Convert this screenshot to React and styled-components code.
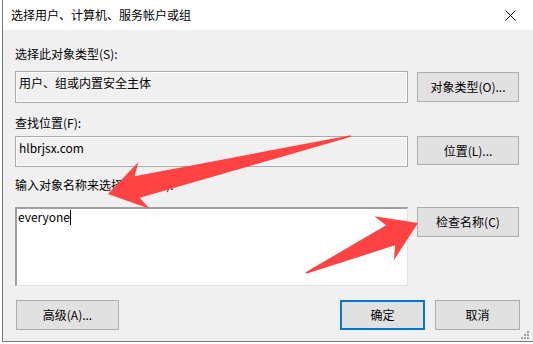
import styled, { createGlobalStyle } from 'styled-components';

const Global = createGlobalStyle`
    html, body {
        margin: 0;
        padding: 0;
        width: 533px;
        height: 344px;
        overflow: hidden;
        background: #ffffff;
    }
    * { box-sizing: border-box; }
`

const Page = styled.div`
    position: relative;
    width: 533px;
    height: 344px;
    overflow: hidden;
    padding-left: 2px;
    font-family: "Noto Sans CJK SC", "Noto Sans", sans-serif;
    font-size: 12px;
    color: #000;
`

const Dialog = styled.div`
    display: flex;
    flex-direction: column;
    width: 545px;
    height: 342px;
    border: 1px solid #7a7a7a;
    border-top: none;
    background: #f0f0f0;
`

const TitleBar = styled.div`
    height: 30px;
    flex-shrink: 0;
    display: flex;
    align-items: center;
    justify-content: space-between;
    background: #fff;
    padding: 0 0 0 8px;
    width: 530px;
    line-height: 16px;
`

const CloseBtn = styled.div`
    width: 46px;
    height: 30px;
    display: flex;
    align-items: center;
    justify-content: center;
`

const Body = styled.div`
    display: flex;
    flex-direction: column;
    padding: 0 12px;
    width: 530px;
`

const Label = styled.div`
    margin-top: ${p => p.$mt}px;
    line-height: 16px;
    height: 16px;
    white-space: nowrap;
`

const Row = styled.div`
    margin-top: ${p => p.$mt}px;
    display: grid;
    grid-template-columns: 393px 102px;
    column-gap: 9px;
    align-items: ${p => p.$align || 'center'};
`

const Field = styled.div`
    height: ${p => p.$h}px;
    border: 1px solid #a9a9a9;
    box-shadow: inset 0 0 0 1px #ffffff;
    padding: 3px 3px;
    line-height: 16px;
    white-space: nowrap;
`

const TextArea = styled.div`
    height: ${p => p.$h}px;
    background: #fff;
    border-top: 2px solid #a0a0a0;
    border-left: 2px solid #a0a0a0;
    border-right: 1px solid #e3e3e3;
    border-bottom: 1px solid #e3e3e3;
    padding: 0 1px;
    line-height: 16px;
`

const Caret = styled.span`
    display: inline-block;
    width: 1px;
    height: 15px;
    background: #000;
    vertical-align: -3px;
`

const Button = styled.div`
    height: ${p => p.$h || 30}px;
    width: ${p => p.$w ? `${p.$w}px` : 'auto'};
    display: flex;
    align-items: center;
    justify-content: center;
    background: #e1e1e1;
    border: ${p => p.$primary ? '2px solid #0078d7' : '1px solid #adadad'};
    white-space: nowrap;
    line-height: 16px;
`

const Footer = styled.div`
    margin-top: ${p => p.$mt}px;
    display: flex;
    justify-content: space-between;
    width: 505px;
    padding-left: 1px;
`

const ButtonGroup = styled.div`
    display: flex;
    gap: 10px;
`

const Overlay = styled.svg`
    position: absolute;
    left: 0;
    top: 0;
    pointer-events: none;
`

const arrowPoints = (tail, tip) => {
    const dx = tip[0] - tail[0];
    const dy = tip[1] - tail[1];
    const len = Math.hypot(dx, dy);
    const u = [dx / len, dy / len];
    const n = [-u[1], u[0]];
    const at = (d, w) => [tip[0] - u[0] * d + n[0] * w, tip[1] - u[1] * d + n[1] * w];
    const pts = [
        tip,
        at(37, 24),
        at(30, 11),
        at(len, 0.8),
        at(len, -0.8),
        at(30, -11),
        at(37, -24),
    ];
    return pts.map(p => p.map(v => v.toFixed(1)).join(',')).join(' ');
};

const App = () => {
    return (
        <Page>
            <Global />
            <Dialog>
                <TitleBar>
                    <span>选择用户、计算机、服务帐户或组</span>
                    <CloseBtn>
                        <svg width="11" height="11" viewBox="0 0 11 11">
                            <path d="M0.5 0.5 L10.5 10.5 M10.5 0.5 L0.5 10.5" stroke="#000" strokeWidth="1" />
                        </svg>
                    </CloseBtn>
                </TitleBar>
                <Body>
                    <Label $mt={16}>选择此对象类型(S):</Label>
                    <Row $mt={9}>
                        <Field $h={32}>用户、组或内置安全主体</Field>
                        <Button>对象类型(O)...</Button>
                    </Row>
                    <Label $mt={12}>查找位置(F):</Label>
                    <Row $mt={5} $align="start">
                        <Field $h={31}>hlbrjsx.com</Field>
                        <Button $h={29}>位置(L)...</Button>
                    </Row>
                    <Label $mt={10}>输入对象名称来选择(示例)(E):</Label>
                    <Row $mt={14} $align="start">
                        <TextArea $h={79}>everyone<Caret /></TextArea>
                        <Button>检查名称(C)</Button>
                    </Row>
                    <Footer $mt={14}>
                        <Button $w={103}>高级(A)...</Button>
                        <ButtonGroup>
                            <Button $w={85} $primary>确定</Button>
                            <Button $w={85}>取消</Button>
                        </ButtonGroup>
                    </Footer>
                </Body>
            </Dialog>
            <Overlay width="533" height="344" viewBox="0 0 533 344">
                <g fill="#a0a0a0">
                    <rect x="527" y="331" width="2" height="2" />
                    <rect x="524" y="334" width="2" height="2" />
                    <rect x="527" y="334" width="2" height="2" />
                    <rect x="521" y="337" width="2" height="2" />
                    <rect x="524" y="337" width="2" height="2" />
                    <rect x="527" y="337" width="2" height="2" />
                </g>
                <polygon points={arrowPoints([351, 136], [108, 194])} fill="#ff4242" />
                <polygon points={arrowPoints([306, 273], [418, 223])} fill="#ff4242" />
            </Overlay>
        </Page>
    );
};

export default App;
